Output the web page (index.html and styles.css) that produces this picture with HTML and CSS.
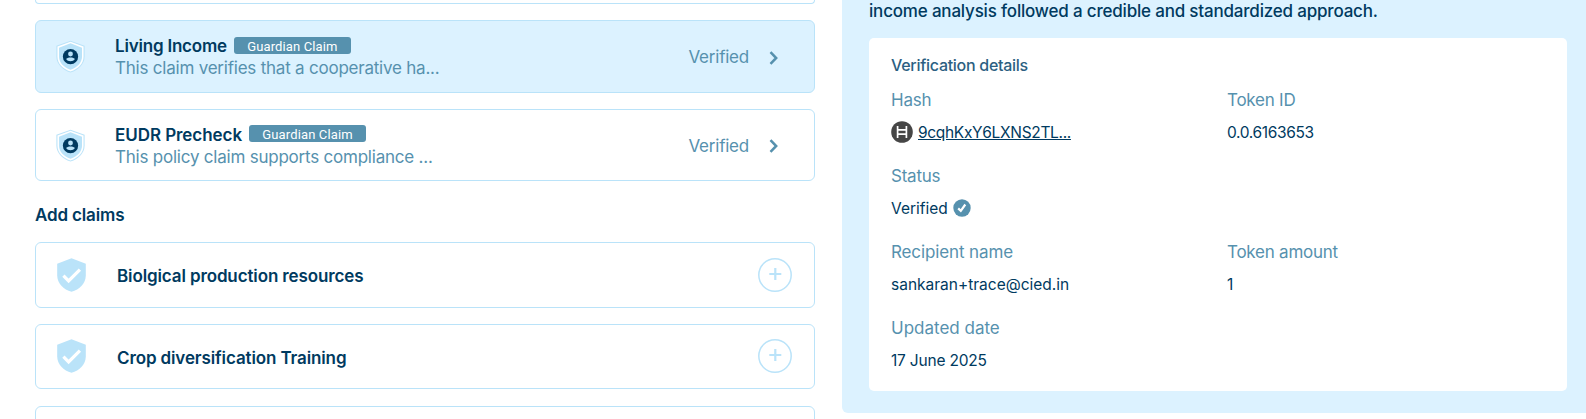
FILE: index.html
```html
<!DOCTYPE html>
<html lang="en">
<head>
<meta charset="utf-8">
<title>Claims</title>
<link rel="stylesheet" href="styles.css">
</head>
<body>
<svg class="defs" aria-hidden="true">
  <symbol id="user-shield" viewBox="0 0 30 34">
    <path d="M15 .6 29.600 6v11c0 7.500-6 13.900-14.600 16.600C6.400 30.900.4 24.500.4 17V6z" fill="#bae3f9"/>
    <path d="M15 1.700 28.500 6.700v10.500c0 6.800-5.400 12.700-13.500 15.200C6.900 29.900 1.500 24 1.500 17.200V6.700z" fill="#fff"/>
    <path d="M15 3.400 26.900 7.900v9.400c0 5.800-4.700 11-11.900 13.400C7.800 28.300 3.100 23.100 3.100 17.300V7.900z" fill="#bae3f9"/>
    <circle cx="15" cy="17.200" r="7.900" fill="#003a60"/>
    <circle cx="15" cy="14.400" r="2.500" fill="#bae3f9"/>
    <path d="M10.500 19.700c.8-2.200 8.200-2.200 9 0-.9 1.500-2.600 2.300-4.500 2.300s-3.600-.8-4.500-2.300z" fill="#bae3f9"/>
  </symbol>
  <symbol id="check-shield" viewBox="0 0 29 34">
    <path d="M14.500.3 28.800 5.700v11.500c0 8-6.300 14.500-14.300 16.600C6.500 31.700.2 25.200.2 17.200V5.700z" fill="#bae3f9"/>
    <path d="m6.400 17.700 5.200 5.200L22.900 11.600" fill="none" stroke="#fff" stroke-width="3.200"/>
  </symbol>
  <symbol id="chevron" viewBox="0 0 10 14">
    <path d="m1.500 1.200 5.700 5.800-5.700 5.800" fill="none" stroke="#5691ae" stroke-width="2.500"/>
  </symbol>
  <symbol id="plus" viewBox="0 0 34 34">
    <circle cx="17" cy="17" r="16.200" fill="none" stroke="#bae3f9" stroke-width="1.500"/>
    <path d="M11.300 16h12M17.300 10v12" fill="none" stroke="#bae3f9" stroke-width="2.200"/>
  </symbol>
</svg>
<main class="page">
  <section class="claims">
    <div class="card card-previous"></div>
    <article class="card card-claim selected">
      <svg class="claim-icon"><use href="#user-shield"/></svg>
      <div class="claim-text">
        <div class="claim-head"><span class="claim-name name-income">Living Income</span><span class="badge">Guardian Claim</span></div>
        <div class="claim-desc">This claim verifies that a cooperative ha...</div>
      </div>
      <span class="claim-status">Verified</span>
      <svg class="chevron"><use href="#chevron"/></svg>
    </article>
    <article class="card card-claim card-eudr">
      <svg class="claim-icon"><use href="#user-shield"/></svg>
      <div class="claim-text">
        <div class="claim-head"><span class="claim-name">EUDR Precheck</span><span class="badge">Guardian Claim</span></div>
        <div class="claim-desc">This policy claim supports compliance ...</div>
      </div>
      <span class="claim-status">Verified</span>
      <svg class="chevron"><use href="#chevron"/></svg>
    </article>
    <h2 class="section-title">Add claims</h2>
    <article class="card card-add">
      <svg class="add-icon"><use href="#check-shield"/></svg>
      <span class="add-name">Biolgical production resources</span>
      <svg class="plus"><use href="#plus"/></svg>
    </article>
    <article class="card card-add card-short">
      <svg class="add-icon"><use href="#check-shield"/></svg>
      <span class="add-name">Crop diversification Training</span>
      <svg class="plus"><use href="#plus"/></svg>
    </article>
    <article class="card card-add"></article>
  </section>
  <aside class="panel">
    <p class="summary">income analysis followed a credible and standardized approach.</p>
    <div class="details">
      <h3 class="details-title">Verification details</h3>
      <dl class="fields">
        <div class="field"><dt>Hash</dt><dd>
          <svg class="hedera" viewBox="0 0 22 22"><circle cx="11" cy="11" r="10.800" fill="#464646"/><path d="M6.600 5v12M15.400 5v12M6.600 8.900h8.800M6.600 13.100h8.800" fill="none" stroke="#fff" stroke-width="1.700"/></svg>
          <a class="hash">9cqhKxY6LXNS2TL...</a></dd></div>
        <div class="field"><dt>Token ID</dt><dd class="token-id">0.0.6163653</dd></div>
        <div class="field wide"><dt>Status</dt><dd>Verified
          <svg class="tick" viewBox="0 0 18 18"><circle cx="9" cy="9" r="8.700" fill="#5691ae"/><path d="m5.200 9.400 2.600 2.500 4.500-6.400" fill="none" stroke="#fff" stroke-width="2.200"/></svg></dd></div>
        <div class="field"><dt class="label-recipient">Recipient name</dt><dd>sankaran+trace@cied.in</dd></div>
        <div class="field"><dt>Token amount</dt><dd>1</dd></div>
        <div class="field wide"><dt class="label-date">Updated date</dt><dd class="date">17 June 2025</dd></div>
      </dl>
    </div>
  </aside>
</main>
</body>
</html>
```
FILE: styles.css
```css
* { box-sizing: border-box; }
body { margin: 0; background: #fff; color: #003a60; font: 17px/22px Inter, "Liberation Sans", sans-serif; overflow: hidden; }
h2, h3, p, dl, dd, dt { margin: 0; }
.defs { display: none; }
.page { display: grid; grid-template-columns: 780px 1fr; column-gap: 27px; height: 419px; padding-left: 35px; overflow: hidden; }
.claims { display: flex; flex-direction: column; }
.card { display: flex; align-items: center; flex: none; border: 1px solid #bae3f9; border-radius: 6px; background: #fff; }
.card-previous { height: 4px; margin-bottom: 16px; border-top: 0; border-radius: 0 0 6px 6px; }
.card-claim { height: 73px; margin-bottom: 16px; padding: 0 35px 0 20px; }
.card-eudr { height: 72px; }
.card-claim.selected { background: #dcf2ff; }
.claim-icon { width: 29px; height: 33px; margin-right: 30px; flex: none; }
.claim-text { flex: 1; }
.card-eudr .claim-text { padding-top: 1px; }
.claim-head { display: flex; align-items: center; gap: 7px; }
.claim-name { font-weight: 600; letter-spacing: -.06px; }
.name-income { letter-spacing: -.2px; }
.badge { display: flex; align-items: center; justify-content: center; width: 117px; height: 17px; padding-top: 2px; border-radius: 3px; background: #5691ae; color: #fff; font: 13px/17px Roboto, sans-serif; letter-spacing: .13px; }
.card-eudr .badge { margin-bottom: 2px; }
.claim-desc { color: #5691ae; letter-spacing: -.22px; }
.claim-status { padding-top: 1px; color: #5691ae; letter-spacing: -.22px; margin-right: 20px; }
.chevron { width: 10px; height: 14px; margin-top: 2px; }
.section-title { height: 45px; padding-top: 1px; font-size: 17px; font-weight: 600; line-height: 35px; letter-spacing: -.15px; }
.card-add { height: 66px; margin-bottom: 16px; padding: 0 22px 0 21px; }
.card-short { height: 65px; margin-bottom: 17px; }
.add-icon { width: 29px; height: 34px; margin: 0 31px 1px 0; }
.add-name { flex: 1; padding-top: 2px; font-weight: 600; letter-spacing: -.12px; }
.plus { width: 34px; height: 34px; }
.card-short .plus { margin-bottom: 1px; }
.panel { height: 413px; padding: 0 19px 0 27px; border-radius: 0 0 0 6px; background: #dcf2ff; }
.summary { height: 38px; font-weight: 500; letter-spacing: -.19px; }
.details { height: 353px; padding: 15px 22px; border-radius: 5px; background: #fff; }
.details-title { font-size: 16px; font-weight: 500; line-height: 24px; letter-spacing: -.28px; color: #2c5f82; }
.fields { display: grid; grid-template-columns: 336px 1fr; grid-auto-rows: 76px; padding-top: 11px; }
.wide { grid-column: 1 / -1; }
dt { color: #5691ae; height: 32px; line-height: 24px; letter-spacing: -.24px; }
.label-recipient { letter-spacing: -.12px; }
.label-date { letter-spacing: 0; }
dd { display: flex; align-items: center; height: 24px; padding-top: 1px; font-size: 15.5px; }
.hedera { width: 22px; height: 22px; margin: -1px 5px 0 0; }
.hash { text-decoration: underline; letter-spacing: -.32px; }
.token-id { letter-spacing: -.36px; }
.date { letter-spacing: -.2px; }
.tick { width: 18px; height: 18px; margin: -2px 0 0 5px; }
```
